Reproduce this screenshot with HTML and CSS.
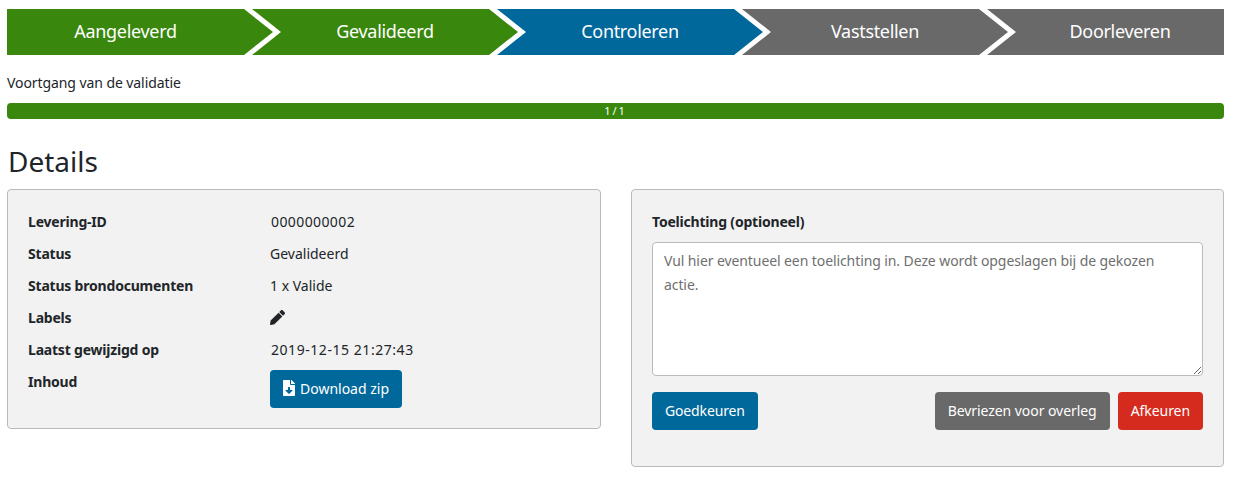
FILE: index.html
```html
<!DOCTYPE html>
<html lang="nl">
<head>
<meta charset="utf-8">
<title>Details</title>
<link rel="stylesheet" href="styles.css">
</head>
<body>
<nav class="steps">
  <div class="step step-done">Aangeleverd</div>
  <div class="step step-done">Gevalideerd</div>
  <div class="step step-active">Controleren</div>
  <div class="step step-todo">Vaststellen</div>
  <div class="step step-todo">Doorleveren</div>
</nav>
<p class="progress-label">Voortgang van de validatie</p>
<div class="progress">1/1</div>
<h2 class="title">Details</h2>
<div class="panels">
  <section class="panel panel-info">
    <dl class="facts">
      <dt>Levering-ID</dt><dd class="num">0000000002</dd>
      <dt>Status</dt><dd>Gevalideerd</dd>
      <dt>Status brondocumenten</dt><dd>1 x Valide</dd>
      <dt>Labels</dt><dd><svg class="icon-pencil" viewBox="0 0 512 512"><path d="M497.9 142.1l-46.1 46.1c-4.7 4.7-12.3 4.7-17 0l-111-111c-4.7-4.7-4.7-12.3 0-17l46.1-46.1c18.7-18.7 49.1-18.7 67.9 0l60.1 60.1c18.8 18.7 18.8 49.1 0 67.9zM284.2 99.8L21.6 362.4.4 483.9c-2.9 16.4 11.4 30.6 27.8 27.8l121.5-21.3 262.6-262.6c4.7-4.7 4.7-12.3 0-17l-111-111c-4.8-4.7-12.4-4.7-17.1 0z"/></svg></dd>
      <dt>Laatst gewijzigd op</dt><dd class="num num-date">2019-12-15 21:27:43</dd>
      <dt>Inhoud</dt><dd><button class="btn btn-blue btn-download" type="button"><svg class="icon-file" viewBox="0 0 384 512"><path d="M224 136V0H24C10.7 0 0 10.7 0 24v464c0 13.3 10.7 24 24 24h336c13.3 0 24-10.7 24-24V160H248c-13.2 0-24-10.8-24-24zm76.45 211.36l-96.42 95.7c-6.65 6.61-17.39 6.61-24.04 0l-96.42-95.7C73.42 337.29 80.54 320 94.82 320H160v-80c0-8.84 7.16-16 16-16h32c8.84 0 16 7.16 16 16v80h65.18c14.28 0 21.4 17.29 11.27 27.36zM377 105L279.1 7c-4.5-4.5-10.6-7-17-7H256v128h128v-6.1c0-6.3-2.5-12.4-7-16.9z"/></svg>Download zip</button></dd>
    </dl>
  </section>
  <section class="panel panel-form">
    <label class="field-label" for="toelichting">Toelichting (optioneel)</label>
    <textarea class="field" id="toelichting" placeholder="Vul hier eventueel een toelichting in. Deze wordt opgeslagen bij de gekozen actie."></textarea>
    <div class="actions">
      <button class="btn btn-blue btn-approve" type="button">Goedkeuren</button>
      <span class="actions-right">
        <button class="btn btn-grey" type="button">Bevriezen voor overleg</button>
        <button class="btn btn-red" type="button">Afkeuren</button>
      </span>
    </div>
  </section>
</div>
</body>
</html>
```
FILE: styles.css
```css
* { box-sizing: border-box; }
body {
  margin: 9px 12px 0 7px;
  background: #fff;
  color: #212529;
  font-family: "Noto Sans", sans-serif;
  font-size: 14px;
  line-height: 24px;
}
.steps { display: flex; height: 46px; overflow: hidden; }
.step {
  flex: 0 0 266px;
  margin-left: -21px;
  padding-bottom: 2px;
  display: flex;
  align-items: center;
  justify-content: center;
  color: #fff;
  font-size: 18px;
  letter-spacing: -0.32px;
  clip-path: polygon(0 0, calc(100% - 29px) 0, 100% 50%, calc(100% - 29px) 100%, 0 100%, 29px 50%);
}
.step:first-child {
  margin-left: 0;
  padding-right: 29px;
  clip-path: polygon(0 0, calc(100% - 29px) 0, 100% 50%, calc(100% - 29px) 100%, 0 100%);
}
.step-done { background: #39870c; }
.step-active { background: #01689b; }
.step-todo { background: #696969; }
.progress-label { margin: 16px 0 8px; letter-spacing: -0.08px; }
.progress {
  height: 16px;
  border-radius: 4px;
  background: #39870c;
  color: #fff;
  font-size: 11px;
  line-height: 16px;
  text-align: center;
  letter-spacing: 2px;
}
.title { margin: 24px 0 10px; font-size: 28px; line-height: 36px; font-weight: 400; padding-left: 1px; }
.panels { display: grid; grid-template-columns: 594px 593px; gap: 30px; align-items: start; }
.panel { background: #f2f2f2; border: 1px solid #bbb; border-radius: 4px; }
.panel-info { height: 240px; padding: 16px 20px; }
.panel-form { height: 278px; padding: 20px; display: flex; flex-direction: column; }
.facts { margin: 0; display: grid; grid-template-columns: 242px 1fr; grid-auto-rows: 32px; }
.facts dt { font-weight: 700; line-height: 32px; letter-spacing: -0.2px; }
.facts dd { margin: 0; line-height: 32px; }
.facts .num { padding-left: 1px; letter-spacing: 0.4px; }
.facts .num-date { letter-spacing: 0.55px; }
.icon-pencil { width: 15px; height: 15px; vertical-align: -2px; fill: #212529; }
.icon-file { width: 12px; height: 16px; margin-right: 5px; vertical-align: -2px; fill: #fff; }
.btn {
  height: 38px;
  padding: 0 13px;
  border: 0;
  border-radius: 4px;
  color: #fff;
  font: inherit;
  letter-spacing: -0.06px;
}
.btn-blue { background: #01689b; }
.btn-grey { background: #696969; }
.btn-red { background: #d52b1e; }
.btn-approve { letter-spacing: -0.15px; }
.btn-download { display: block; width: 132px; padding: 0; margin-top: 4px; letter-spacing: 0; }
.field-label { font-weight: 700; line-height: 24px; margin-bottom: 8px; letter-spacing: -0.2px; }
.field {
  display: block;
  width: 100%;
  height: 134px;
  padding: 6px 12px 6px 11px;
  border: 1px solid #bbb;
  border-radius: 4px;
  background: #fff;
  color: #212529;
  font: inherit;
  letter-spacing: -0.09px;
  outline: 0;
}
.field::placeholder { color: #6f6f6f; opacity: 1; }
.actions { display: flex; justify-content: space-between; margin-top: 16px; }
.actions-right { display: flex; gap: 8px; }
```
